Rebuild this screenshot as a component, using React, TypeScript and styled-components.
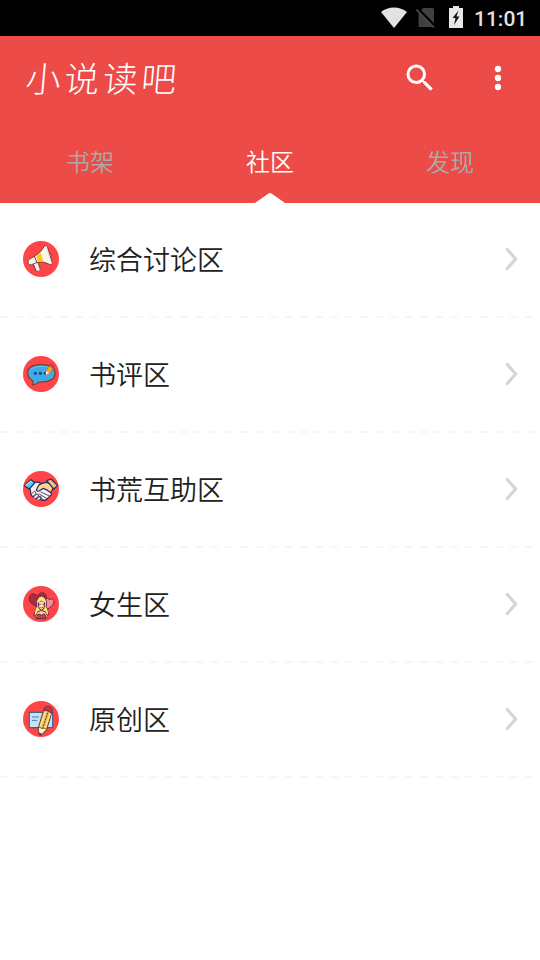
import React from 'react';
import styled, { createGlobalStyle } from 'styled-components';

const GlobalStyle = createGlobalStyle`
  * { box-sizing: border-box; }
  body {
    margin: 0;
    background: #fff;
    font-family: Roboto, 'Noto Sans CJK SC', sans-serif;
  }
  svg { display: block; flex: none; }
`;

const Screen = styled.div`
  width: 540px;
  height: 960px;
  overflow: hidden;
  background: #fff;
`;

const StatusBar = styled.div`
  height: 36px;
  background: #000;
  display: flex;
  align-items: center;
  justify-content: flex-end;
  padding-right: 12px;
`;

const Clock = styled.span`
  width: 54px;
  margin-left: 11px;
  padding-top: 2px;
  font: 500 21px/34px Roboto, sans-serif;
  color: #e2e2e2;
  white-space: nowrap;
`;

const Header = styled.header`
  height: 167px;
  background: #ec4b48;
  color: #fff;
`;

const Toolbar = styled.div`
  height: 84px;
  display: flex;
  align-items: center;
  padding: 0 24px 0 26px;
`;

const Brand = styled.h1`
  margin: 0;
  flex: 1;
  padding-bottom: 3px;
  font: 200 35px/52px 'Noto Sans CJK SC', sans-serif;
  letter-spacing: 3.5px;
  white-space: nowrap;
`;

const BrandText = styled.span`
  display: inline-block;
  transform: skewX(-5deg);
`;

const IconButton = styled.button`
  width: 36px;
  height: 36px;
  padding: 0;
  border: 0;
  background: none;
  color: #fff;
  & + & { margin-left: 42px; }
`;

const Tabs = styled.nav`
  height: 83px;
  display: grid;
  grid-template-columns: repeat(3, 1fr);
`;

const Tab = styled.div<{ $active?: boolean }>`
  display: flex;
  flex-direction: column;
  align-items: center;
  justify-content: space-between;
  font: 350 24px/36px 'Noto Sans CJK SC', sans-serif;
  padding-top: 23px;
  color: ${(p) => (p.$active ? '#fff' : '#aaa')};
`;

const Row = styled.div`
  height: 115px;
  display: flex;
  align-items: center;
  padding: 0 22px 3px 23px;
  background: repeating-linear-gradient(90deg, #f6f6f6 0 8px, #fff 8px 15px) 0 100% / 100% 2px no-repeat;
`;

const RowLabel = styled.span`
  flex: 1;
  margin-left: 30px;
  font: 350 27px/40px 'Noto Sans CJK SC', sans-serif;
  color: #212121;
`;

const BadgeSvg = styled.svg`
  width: 36px;
  height: 36px;
  overflow: visible;
`;

const Badge = ({ children }: { children: React.ReactNode }) => (
  <BadgeSvg viewBox="21 21 108 108" strokeLinejoin="round" strokeLinecap="round">
    <circle cx="75" cy="75" r="54" fill="#ff4547" />
    <path d="M115 33l3-6M120 36l6-7M122 39h6" stroke="#f8dfe1" strokeWidth="2" fill="none" />
    {children}
  </BadgeSvg>
);

const Megaphone = () => (
  <Badge>
    <g stroke="#70352c" strokeWidth="2.5">
      <path d="M97 55q10 2 9 9q0 5-5 6z" fill="#ffc52e" />
      <path d="M52 87l13-4l8 24q-5 9-12 4z" fill="#f3f0f5" />
      <path d="M40 76q-7 4-3 12q4 7 10 4l17-7l-7-18z" fill="#f5f3f8" />
      <path d="M56 67Q76 55 86 36q4-4 8 2l15 49q0 6-6 5Q85 80 64 85z" fill="#fff8ed" />
    </g>
    <path d="M61 67l13-11l8 26l-15 2z" fill="#ffc31c" />
    <path d="M88 39q11 20 17 48" fill="none" stroke="#e4dce2" strokeWidth="3" />
  </Badge>
);

const ChatBubble = () => (
  <Badge>
    <path d="M76 47C49 47 35 57 35 73c0 11 6 17 15 22q4 7-1 13q13-1 19-9c31 1 49-8 49-25c0-18-17-27-41-27z" fill="#41aae5" stroke="#71402e" strokeWidth="3.5" />
    <path d="M42 64q9-12 32-12q14 0 22 3" fill="none" stroke="#65c3ef" strokeWidth="3" />
    <g fill="#164e8d"><circle cx="58" cy="73" r="5" /><circle cx="73" cy="73" r="5" /><circle cx="87" cy="73" r="4" /></g>
    <path d="M90 66l10-17l12 7l-10 17l-12 4z" fill="#f5a629" stroke="#9b5430" strokeWidth="1.5" />
    <path d="M90 66l10 7l-10 4z" fill="#fff1d7" />
    <path d="M100 49q3-6 9-2q6 4 3 9z" fill="#ef4145" stroke="#713b35" strokeWidth="2" />
  </Badge>
);

const Handshake = () => (
  <Badge>
    <g stroke="#292b5b" strokeWidth="3.5">
      <path d="M40 69l17-14q13-2 20 5l27 25q5 7-1 10l-11 11q-8 6-17 1L48 96q-6-7-4-13z" fill="#f7f2f5" />
      <path d="M91 55l-13 3q-9 2-13 11l-4 10q7 6 14-2l7-4q12 4 22 13l6-11l4-9z" fill="#ffd69a" />
      <path d="M25 65l20-18l12 9l-17 19z" fill="#54c5f4" />
      <path d="M92 50l13-5l20 20l-12 10z" fill="#f8bd70" />
      <path d="M46 90l9-8q6 1 5 7l-8 7M53 98l10-8q7 1 4 7l-9 7M63 104l9-8q6 1 3 7l-7 6" fill="#f7f2f5" strokeWidth="2.5" />
      <path d="M75 84l25 12M70 90l23 14M67 96l16 12" fill="none" strokeWidth="2.5" />
    </g>
    <path d="M30 64l15-12" stroke="#b0e6f7" strokeWidth="4" />
  </Badge>
);

const Girl = () => (
  <Badge>
    <g stroke="#642b3c" strokeWidth="3">
      <path d="M66 85C50 77 39 70 40 57c1-15 17-16 24-5c8-17 29-12 27 4c-1 12-14 22-25 29z" fill="#a62f3f" />
      <path d="M94 90c-6-6-9-12-8-21c0-12 11-14 15-6c6-8 16-1 12 10c-3 8-10 12-19 17z" fill="#f48ca0" />
      <path d="M62 83q-3-30 14-32q18 2 15 32q1 13 8 24q-7 3-13 1H66q-7 2-13-1q8-12 9-24z" fill="#ffd773" />
      <path d="M58 112l6-13l12-5l13 5l6 13l-6 6H65z" fill="#ffcf9c" />
      <path d="M68 68q8-4 17-1v17q-3 10-8 10q-8-2-9-10z" fill="#ffd8ad" />
      <path d="M66 106q6-2 10 3q5-5 11-3l3 13H63z" fill="#c43d49" />
    </g>
    <path d="M65 67q8 0 11-11q3 10 11 11M63 87l-4 16M90 88l4 15" fill="none" stroke="#ffe68d" strokeWidth="5" />
    <path d="M70 76h3M81 76h3M74 86q3 3 6 0" fill="none" stroke="#64303b" strokeWidth="2.5" />
  </Badge>
);

const Notebook = () => (
  <Badge>
    <path d="M40 55h70v46H40z" fill="#c3e4f7" stroke="#476184" strokeWidth="3.5" />
    <path d="M49 69h19M49 79h14" stroke="#5276b0" strokeWidth="3" />
    <path d="M67 101l16-53q11-3 24 8l-15 51l-17 18q-5-1-6-6z" fill="#eeb84a" stroke="#653c39" strokeWidth="3" />
    <path d="M67 101q6-3 11 3q7-4 14 2l-17 18q-5-1-6-6z" fill="#fff0d4" stroke="#713f3d" strokeWidth="2.5" />
    <path d="M88 55L74 96M102 59L88 100" stroke="#ffe58a" strokeWidth="5" />
    <path d="M95 57L81 101" stroke="#67453a" strokeWidth="3" strokeDasharray="4 5" />
    <path d="M83 49l5-11q15-5 21 7l-2 14q-9-11-24-10z" fill="#c8323d" stroke="#713541" strokeWidth="3" />
    <path d="M69 116l2 9l8-6z" fill="#473246" />
  </Badge>
);

const Chevron = () => (
  <svg width="13" height="24" viewBox="0 0 13 24">
    <path d="M2.3 2.5L10.7 12L2.3 21.5" fill="none" stroke="#d5d5d5" strokeWidth="3.2" strokeLinecap="round" strokeLinejoin="round" />
  </svg>
);

const WifiIcon = () => (
  <svg width="26" height="22" viewBox="0 0 26 22">
    <path d="M0 6Q5.5 1.5 13 1.5T26 6L13 22z" fill="#e2e2e2" />
  </svg>
);

const NoSimIcon = () => (
  <svg width="20" height="22" viewBox="0 0 20 22">
    <path d="M7 2h9.5Q18 2 18 3.5V21H2.5V7z" fill="#404040" />
    <path d="M1.5 2.5L19 20" stroke="#000" strokeWidth="2.5" />
    <path d="M.5 3.5L18 21.5" stroke="#4a4a4a" strokeWidth="1.7" />
  </svg>
);

const BatteryIcon = () => (
  <svg width="14" height="22" viewBox="0 0 14 22">
    <path d="M4 0h6v2h4v20H0V2h4z" fill="#e8e8e8" />
    <path d="M9.5 4.5L3.5 12h3L5 19l5.5-8.5H7.5z" fill="#111" />
  </svg>
);

const StatusIcons = styled.div`
  display: grid;
  grid-template-columns: 26px 20px 14px;
  column-gap: 9px;
  align-items: center;
  width: 82px;
  padding-bottom: 2px;
  & > :last-child { margin-left: 4px; }
`;

const SearchIcon = () => (
  <svg width="36" height="36" viewBox="0 0 24 24" fill="currentColor">
    <path d="M15.5 14h-.79l-.28-.27A6.47 6.47 0 0 0 16 9.5 6.5 6.5 0 1 0 9.5 16c1.61 0 3.09-.59 4.23-1.57l.27.28v.79l5 4.99L20.49 19l-4.99-5zm-6 0a4.5 4.5 0 1 1 0-9 4.5 4.5 0 0 1 0 9z" />
  </svg>
);

const MoreIcon = () => (
  <svg width="36" height="36" viewBox="0 0 24 24" fill="currentColor">
    <circle cx="12" cy="6" r="2.1" /><circle cx="12" cy="12" r="2.1" /><circle cx="12" cy="18" r="2.1" />
  </svg>
);

const TabPointer = () => (
  <svg width="30" height="10" viewBox="0 0 30 10">
    <path d="M0 10L13.5.5Q15-.5 16.5.5L30 10z" fill="#fff" />
  </svg>
);

const sections = [
  { name: '综合讨论区', Icon: Megaphone },
  { name: '书评区', Icon: ChatBubble },
  { name: '书荒互助区', Icon: Handshake },
  { name: '女生区', Icon: Girl },
  { name: '原创区', Icon: Notebook },
];

export default function App() {
  return (
    <>
      <GlobalStyle />
      <Screen>
        <StatusBar>
          <StatusIcons><WifiIcon /><NoSimIcon /><BatteryIcon /></StatusIcons>
          <Clock>11:01</Clock>
        </StatusBar>
        <Header>
          <Toolbar>
            <Brand><BrandText>小说读吧</BrandText></Brand>
            <IconButton aria-label="搜索"><SearchIcon /></IconButton>
            <IconButton aria-label="更多"><MoreIcon /></IconButton>
          </Toolbar>
          <Tabs>
            <Tab>书架</Tab>
            <Tab $active>社区<TabPointer /></Tab>
            <Tab>发现</Tab>
          </Tabs>
        </Header>
        <main>
          {sections.map(({ name, Icon }) => (
            <Row key={name}><Icon /><RowLabel>{name}</RowLabel><Chevron /></Row>
          ))}
        </main>
      </Screen>
    </>
  );
}
